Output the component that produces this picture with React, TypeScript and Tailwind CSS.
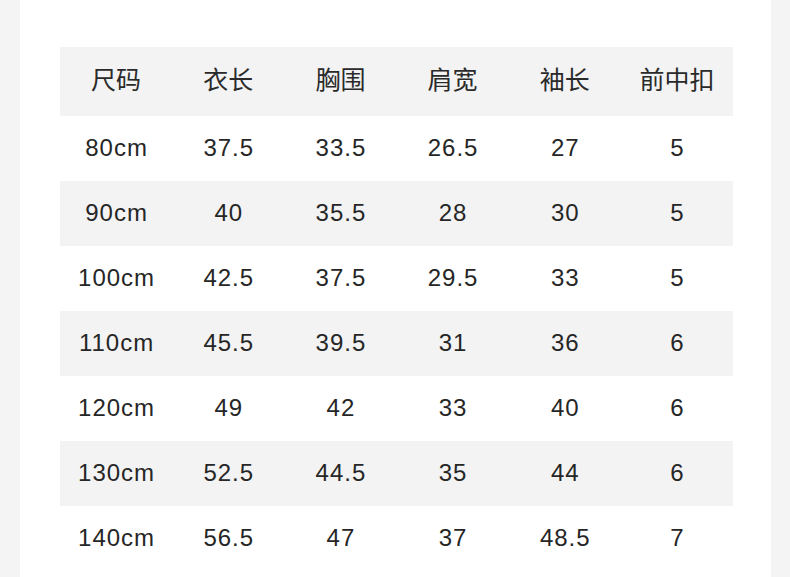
const header = ['尺码', '衣长', '胸围', '肩宽', '袖长', '前中扣'];

const rows = [
  ['80cm', '37.5', '33.5', '26.5', '27', '5'],
  ['90cm', '40', '35.5', '28', '30', '5'],
  ['100cm', '42.5', '37.5', '29.5', '33', '5'],
  ['110cm', '45.5', '39.5', '31', '36', '6'],
  ['120cm', '49', '42', '33', '40', '6'],
  ['130cm', '52.5', '44.5', '35', '44', '6'],
  ['140cm', '56.5', '47', '37', '48.5', '7'],
];

export default function App() {
  return (
    <div className="flex h-[577px] w-[790px] overflow-hidden bg-white text-[#262626]">
      <div className="w-[20px] shrink-0 bg-[#f4f4f4]" />
      <div className="flex-1 pl-[40px] pt-[47px]">
        <div className="w-[673px] font-['Liberation_Sans','Noto_Sans_CJK_SC',sans-serif]">
          <div className="grid h-[69px] grid-cols-6 items-center bg-[#f3f3f3]">
            {header.map((h) => (
              <div
                key={h}
                className="pb-[5px] text-center font-['Noto_Sans_CJK_SC',sans-serif] text-[25px] font-normal text-[#2a2a2a]"
              >
                {h}
              </div>
            ))}
          </div>
          {rows.map((row, i) => (
            <div
              key={row[0]}
              className={`grid h-[65px] grid-cols-6 items-center text-[24px] tracking-[1px] ${i % 2 === 1 ? 'bg-[#f3f3f3]' : 'bg-white'}`}
            >
              {row.map((cell, j) => (
                <div key={j} className="pb-[2px] pl-[1px] text-center">
                  {cell}
                </div>
              ))}
            </div>
          ))}
        </div>
      </div>
      <div className="w-[19px] shrink-0 bg-[#f4f4f4]" />
    </div>
  );
}
